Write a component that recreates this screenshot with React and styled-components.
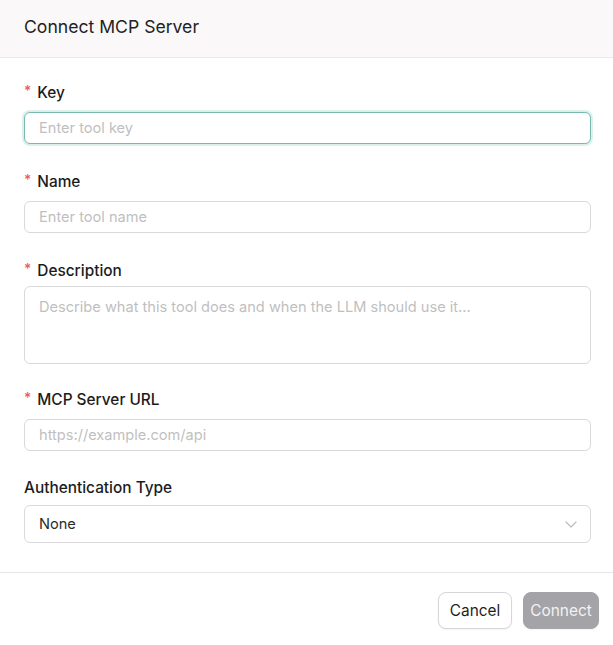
import React from "react";
import styled, {createGlobalStyle} from "styled-components";

const GlobalStyle = createGlobalStyle`
  html, body {
    margin: 0;
    padding: 0;
    background: #ffffff;
  }

  body {
    font-family: Inter, "Noto Sans", "Liberation Sans", sans-serif;
    color: #1f1f1f;
  }

  * {
    box-sizing: border-box;
  }
`;

// 폼 필드 정보
const fields = [
    {key: "key", label: "Key", placeholder: "Enter tool key", required: true, focused: true, space: 27},
    {key: "name", label: "Name", placeholder: "Enter tool name", required: true, space: 27},
    {key: "desc", label: "Description", placeholder: "Describe what this tool does and when the LLM should use it...", required: true, multiline: true, space: 25},
    {key: "url", label: "MCP Server URL", placeholder: "https://example.com/api", required: true, space: 26},
];

function App() {
    return (
        <Dialog>
            <GlobalStyle/>
            <Header>
                <Title>Connect MCP Server</Title>
            </Header>

            <Body>
                {fields.map((f) => (
                    <Field key={f.key} $space={f.space}>
                        <Label $gap={f.multiline ? 5 : 9}>
                            {f.required && <Star>*</Star>}
                            {f.label}
                        </Label>
                        {f.multiline
                            ? <TextArea placeholder={f.placeholder} readOnly/>
                            : <Input placeholder={f.placeholder} $focused={f.focused} readOnly/>}
                    </Field>
                ))}

                <Field $space={0}>
                    <Label $gap={7}>Authentication Type</Label>
                    <Select>
                        <span>None</span>
                        <svg width="14" height="14" viewBox="0 0 14 14" fill="none">
                            <path d="M2 5l5 5 5-5" stroke="#bdbdbd" strokeWidth="1.2" strokeLinecap="round" strokeLinejoin="round"/>
                        </svg>
                    </Select>
                </Field>
            </Body>

            <Footer>
                <Button>Cancel</Button>
                <Button $primary disabled>Connect</Button>
            </Footer>
        </Dialog>
    )
}

const Dialog = styled.div`
  width: 613px;
  height: 645px;
  background: #fff;
  display: flex;
  flex-direction: column;
`;

const Header = styled.div`
  height: 58px;
  background: #faf8f9;
  border-bottom: 1px solid #ebe9ea;
  display: flex;
  align-items: center;
  padding: 0 24px 4px;
`;

const Title = styled.h2`
  margin: 0;
  font-size: 17.6px;
  font-weight: 400;
  color: #222;
`;

const Body = styled.div`
  padding: 24px 22px 0 24px;
  display: flex;
  flex-direction: column;
`;

const Field = styled.div`
  display: flex;
  flex-direction: column;
  margin-bottom: ${(p) => p.$space}px;
`;

const Label = styled.label`
  display: flex;
  align-items: flex-start;
  font-size: 15.4px;
  line-height: 20px;
  font-weight: 500;
  color: #1c1c1c;
  margin-bottom: ${(p) => p.$gap}px;
  padding-top: 1px;
`;

const Star = styled.span`
  color: #ef5a57;
  font-size: 14px;
  line-height: 16px;
  margin-right: 6px;
`;

const Input = styled.input`
  height: 32px;
  width: 100%;
  border: 1px solid ${(p) => (p.$focused ? "#78b9b0" : "#d9d9d9")};
  box-shadow: ${(p) => (p.$focused ? "0 0 0 2px #dcefec" : "none")};
  border-radius: 6px;
  padding: 0 14px;
  font-family: inherit;
  font-size: 14.6px;
  color: #333;
  outline: none;
  background: #fff;

  &::placeholder {
    color: #bfbfbf;
  }
`;

const TextArea = styled.textarea`
  height: 78px;
  width: 100%;
  border: 1px solid #d9d9d9;
  border-radius: 6px;
  padding: 10px 14px;
  font-family: inherit;
  font-size: 14.6px;
  line-height: 20px;
  color: #333;
  resize: none;
  outline: none;

  &::placeholder {
    color: #bfbfbf;
  }
`;

const Select = styled.div`
  height: 38px;
  border: 1px solid #d9d9d9;
  border-radius: 6px;
  padding: 0 12px 0 14px;
  display: flex;
  align-items: center;
  justify-content: space-between;
  font-size: 14.6px;
  color: #2a2a2a;
`;

const Footer = styled.div`
  margin-top: 29px;
  border-top: 1px solid #e6e6e6;
  padding: 19px 14px 0 0;
  display: flex;
  justify-content: flex-end;
  gap: 11px;
`;

const Button = styled.button`
  height: 37px;
  padding: 0;
  width: ${(p) => (p.$primary ? "76px" : "74px")};
  border-radius: 8px;
  border: 1px solid ${(p) => (p.$primary ? "#a3a3a8" : "#d6d6d6")};
  background: ${(p) => (p.$primary ? "#a3a3a8" : "#fff")};
  color: ${(p) => (p.$primary ? "#f2f2f2" : "#1f1f1f")};
  font-family: inherit;
  font-size: 15.4px;
  cursor: pointer;
  box-shadow: 0 1px 2px rgba(0, 0, 0, 0.05);
`;

export default App;
